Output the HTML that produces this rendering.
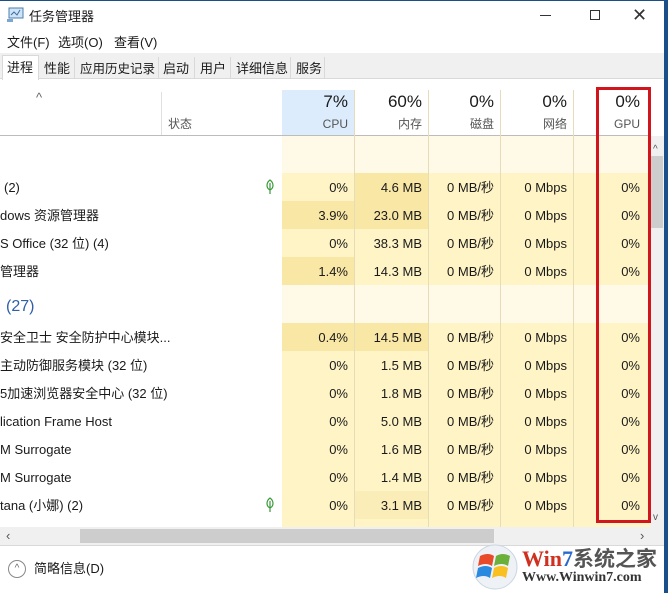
<!DOCTYPE html><html><head><meta charset="utf-8"><style>
*{margin:0;padding:0;box-sizing:border-box}
body{width:668px;height:593px;background:#fff;position:relative;overflow:hidden;font-family:"Liberation Sans","Noto Sans CJK SC",sans-serif;font-size:13px;line-height:16px;color:#1a1a1a}
.a{position:absolute;white-space:nowrap}
.r{text-align:right}
.c{position:absolute;background:#fff4c6}
.d{background:#f9e7a6}
.l{background:#fff9e8}
</style></head><body>
<div class="a" style="left:664px;top:0;width:4px;height:593px;background:#1b4f8a"></div>
<div class="a" style="left:0;top:0;width:664px;height:1px;background:#1b4f8a"></div>
<svg class="a" style="left:7px;top:7px" width="18" height="16"><rect x="2" y="1" width="14" height="10" fill="#cfe3f5" stroke="#4a7fb0"/><polyline points="4,8 7,5 10,8 13,3" fill="none" stroke="#3a6ea5"/><rect x="0" y="12" width="6" height="3" fill="#7aa6d0"/></svg>
<div class="a" style="left:29px;top:9px;font-size:13px">任务管理器</div>
<div class="a" style="left:540px;top:15px;width:11px;height:1px;background:#333"></div>
<div class="a" style="left:590px;top:10px;width:10px;height:10px;border:1px solid #333"></div>
<div class="a" style="left:632px;top:6px;font-size:18px;line-height:18px;color:#333">✕</div>
<div class="a" style="left:7px;top:35px">文件(F)</div>
<div class="a" style="left:58px;top:35px">选项(O)</div>
<div class="a" style="left:114px;top:35px">查看(V)</div>
<div class="a" style="left:0;top:53px;width:664px;height:26px;background:#f0f0f0;border-bottom:1px solid #d9d9d9"></div>
<div class="a" style="left:2px;top:55px;width:37px;height:25px;background:#fff;border:1px solid #d9d9d9;border-bottom:none"></div>
<div class="a" style="left:7px;top:60px">进程</div>
<div class="a" style="left:44px;top:61px">性能</div>
<div class="a" style="left:80px;top:61px;font-size:12.5px">应用历史记录</div>
<div class="a" style="left:163px;top:61px">启动</div>
<div class="a" style="left:200px;top:61px">用户</div>
<div class="a" style="left:236px;top:61px">详细信息</div>
<div class="a" style="left:296px;top:61px">服务</div>
<div class="a" style="left:74px;top:57px;width:1px;height:22px;background:#d9d9d9"></div>
<div class="a" style="left:158px;top:57px;width:1px;height:22px;background:#d9d9d9"></div>
<div class="a" style="left:194px;top:57px;width:1px;height:22px;background:#d9d9d9"></div>
<div class="a" style="left:230px;top:57px;width:1px;height:22px;background:#d9d9d9"></div>
<div class="a" style="left:290px;top:57px;width:1px;height:22px;background:#d9d9d9"></div>
<div class="a" style="left:324px;top:57px;width:1px;height:22px;background:#d9d9d9"></div>
<div class="a" style="left:282px;top:90px;width:72px;height:45px;background:#dcecfc"></div>
<div class="a" style="left:0;top:135px;width:650px;height:1px;background:#bcbcbc"></div>
<div class="a" style="left:36px;top:90px;color:#666">^</div>
<div class="a" style="left:161px;top:92px;width:1px;height:43px;background:#e0e0e0"></div>
<div class="a" style="left:168px;top:116px;color:#555;font-size:12px">状态</div>
<div class="a r" style="left:282px;top:93px;width:66px;font-size:17px;line-height:18px">7%</div>
<div class="a r" style="left:282px;top:116px;width:66px;font-size:12px;color:#555">CPU</div>
<div class="a r" style="left:354px;top:93px;width:68px;font-size:17px;line-height:18px">60%</div>
<div class="a r" style="left:354px;top:116px;width:68px;font-size:12px;color:#555">内存</div>
<div class="a r" style="left:428px;top:93px;width:66px;font-size:17px;line-height:18px">0%</div>
<div class="a r" style="left:428px;top:116px;width:66px;font-size:12px;color:#555">磁盘</div>
<div class="a r" style="left:500px;top:93px;width:67px;font-size:17px;line-height:18px">0%</div>
<div class="a r" style="left:500px;top:116px;width:67px;font-size:12px;color:#555">网络</div>
<div class="a r" style="left:598px;top:93px;width:42px;font-size:17px;line-height:18px">0%</div>
<div class="a r" style="left:598px;top:116px;width:42px;font-size:12px;color:#555">GPU</div>
<div class="c" style="left:282px;top:136px;width:368px;height:391px"></div>
<div class="a l" style="left:282px;top:136px;width:368px;height:37px"></div>
<div class="a l" style="left:282px;top:285px;width:368px;height:38px"></div>
<div class="a d" style="left:355px;top:173px;width:73px;height:28px"></div>
<div class="a d" style="left:282px;top:201px;width:72px;height:28px"></div>
<div class="a d" style="left:355px;top:201px;width:73px;height:28px"></div>
<div class="a d" style="left:282px;top:257px;width:72px;height:28px"></div>
<div class="a d" style="left:282px;top:323px;width:72px;height:28px"></div>
<div class="a d" style="left:355px;top:323px;width:73px;height:28px"></div>
<div class="a d" style="left:355px;top:491px;width:73px;height:28px;background:#fbedb8"></div>
<div class="a" style="left:354px;top:90px;width:1px;height:437px;background:#e6dcb8"></div>
<div class="a" style="left:428px;top:90px;width:1px;height:437px;background:#e6dcb8"></div>
<div class="a" style="left:500px;top:90px;width:1px;height:437px;background:#e6dcb8"></div>
<div class="a" style="left:573px;top:90px;width:1px;height:437px;background:#e6dcb8"></div>
<div class="a" style="left:4px;top:180px">(2)</div>
<div class="a" style="left:0;top:208px">dows 资源管理器</div>
<div class="a" style="left:0;top:236px">S Office (32 位) (4)</div>
<div class="a" style="left:0;top:264px">管理器</div>
<div class="a" style="left:6px;top:298px;font-size:16px;line-height:18px;color:#2f5fa8">(27)</div>
<div class="a" style="left:0;top:330px">安全卫士 安全防护中心模块...</div>
<div class="a" style="left:0;top:358px">主动防御服务模块 (32 位)</div>
<div class="a" style="left:0;top:386px">5加速浏览器安全中心 (32 位)</div>
<div class="a" style="left:0;top:414px">lication Frame Host</div>
<div class="a" style="left:0;top:442px">M Surrogate</div>
<div class="a" style="left:0;top:470px">M Surrogate</div>
<div class="a" style="left:0;top:498px">tana (小娜) (2)</div>
<svg class="a" style="left:264px;top:179px" width="12" height="16"><path d="M6 1C2 4 2 9 6 11C10 9 10 4 6 1ZM6 4V15" fill="none" stroke="#3a9a3a" stroke-width="1.2"/></svg>
<svg class="a" style="left:264px;top:497px" width="12" height="16"><path d="M6 1C2 4 2 9 6 11C10 9 10 4 6 1ZM6 4V15" fill="none" stroke="#3a9a3a" stroke-width="1.2"/></svg>
<div id="v"></div>
<script>
var rows=[[180,"0%","4.6 MB"],[208,"3.9%","23.0 MB"],[236,"0%","38.3 MB"],[264,"1.4%","14.3 MB"],[330,"0.4%","14.5 MB"],[358,"0%","1.5 MB"],[386,"0%","1.8 MB"],[414,"0%","5.0 MB"],[442,"0%","1.6 MB"],[470,"0%","1.4 MB"],[498,"0%","3.1 MB"]];
var h="";rows.forEach(function(r){var t=r[0];
h+='<div class="a r" style="left:282px;top:'+t+'px;width:66px">'+r[1]+'</div>';
h+='<div class="a r" style="left:354px;top:'+t+'px;width:68px">'+r[2]+'</div>';
h+='<div class="a r" style="left:428px;top:'+t+'px;width:66px">0 MB/秒</div>';
h+='<div class="a r" style="left:500px;top:'+t+'px;width:67px">0 Mbps</div>';
h+='<div class="a r" style="left:598px;top:'+t+'px;width:42px">0%</div>';});
document.getElementById("v").innerHTML=h;
</script>
<div class="a" style="left:650px;top:136px;width:14px;height:391px;background:#f0f0f0"></div>
<div class="a" style="left:653px;top:142px;font-size:10px;color:#555">^</div>
<div class="a" style="left:651px;top:156px;width:12px;height:72px;background:#cdcdcd"></div>
<div class="a" style="left:653px;top:510px;font-size:10px;color:#555">v</div>
<div class="a" style="left:596px;top:87px;width:55px;height:436px;border:3px solid #d0161c"></div>
<div class="a" style="left:0;top:527px;width:664px;height:18px;background:#f0f0f0"></div>
<div class="a" style="left:80px;top:529px;width:414px;height:14px;background:#cdcdcd"></div>
<div class="a" style="left:6px;top:528px;color:#555">‹</div>
<div class="a" style="left:640px;top:528px;color:#555">›</div>
<div class="a" style="left:0;top:545px;width:664px;height:1px;background:#d9d9d9"></div>
<div class="a" style="left:8px;top:560px;width:18px;height:18px;border:1px solid #888;border-radius:50%;font-size:10px;text-align:center;line-height:16px;color:#666">^</div>
<div class="a" style="left:34px;top:561px">简略信息(D)</div>
<svg class="a" style="left:468px;top:544px" width="54" height="46"><circle cx="27" cy="23" r="22" fill="#eef2f6" stroke="#ccd6e0"/><path d="M12 12Q20 8 26 12L24 22Q18 18 10 22Z" fill="#e84a2a"/><path d="M28 12Q35 8 42 12L40 22Q34 18 26 22Z" fill="#6ab03a"/><path d="M10 24Q18 20 24 24L22 34Q16 30 8 34Z" fill="#2a8ae0"/><path d="M26 24Q33 20 40 24L38 34Q32 30 24 34Z" fill="#f8c020"/></svg>
<div class="a" style="left:522px;top:546px;font-family:'Liberation Serif',serif;font-weight:bold;font-size:22px;line-height:24px;color:#d03020">Win<span style="color:#2a6ad0">7</span><span style="font-family:'Noto Sans CJK SC',sans-serif;color:#555;font-size:21px">系统之家</span></div>
<div class="a" style="left:522px;top:570px;font-family:'Liberation Serif',serif;font-weight:bold;font-size:14px;color:#333">Www.Winwin7.com</div>
</body></html>
